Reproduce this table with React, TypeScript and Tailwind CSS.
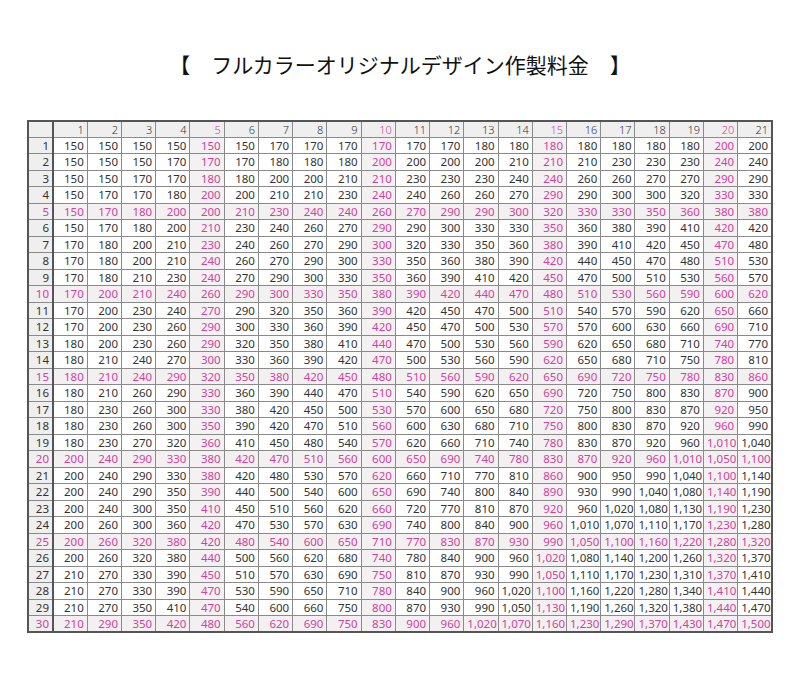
import React from 'react';

// 30 rows (quantity) x 21 columns (size), yen
const prices: number[][] = [
  [150, 150, 150, 150, 150, 150, 170, 170, 170, 170, 170, 170, 180, 180, 180, 180, 180, 180, 180, 200, 200],
  [150, 150, 150, 170, 170, 170, 180, 180, 180, 200, 200, 200, 200, 210, 210, 210, 230, 230, 230, 240, 240],
  [150, 150, 170, 170, 180, 180, 200, 200, 210, 210, 230, 230, 230, 240, 240, 260, 260, 270, 270, 290, 290],
  [150, 170, 170, 180, 200, 200, 210, 210, 230, 240, 240, 260, 260, 270, 290, 290, 300, 300, 320, 330, 330],
  [150, 170, 180, 200, 200, 210, 230, 240, 240, 260, 270, 290, 290, 300, 320, 330, 330, 350, 360, 380, 380],
  [150, 170, 180, 200, 210, 230, 240, 260, 270, 290, 290, 300, 330, 330, 350, 360, 380, 390, 410, 420, 420],
  [170, 180, 200, 210, 230, 240, 260, 270, 290, 300, 320, 330, 350, 360, 380, 390, 410, 420, 450, 470, 480],
  [170, 180, 200, 210, 240, 260, 270, 290, 300, 330, 350, 360, 380, 390, 420, 440, 450, 470, 480, 510, 530],
  [170, 180, 210, 230, 240, 270, 290, 300, 330, 350, 360, 390, 410, 420, 450, 470, 500, 510, 530, 560, 570],
  [170, 200, 210, 240, 260, 290, 300, 330, 350, 380, 390, 420, 440, 470, 480, 510, 530, 560, 590, 600, 620],
  [170, 200, 230, 240, 270, 290, 320, 350, 360, 390, 420, 450, 470, 500, 510, 540, 570, 590, 620, 650, 660],
  [170, 200, 230, 260, 290, 300, 330, 360, 390, 420, 450, 470, 500, 530, 570, 570, 600, 630, 660, 690, 710],
  [180, 200, 230, 260, 290, 320, 350, 380, 410, 440, 470, 500, 530, 560, 590, 620, 650, 680, 710, 740, 770],
  [180, 210, 240, 270, 300, 330, 360, 390, 420, 470, 500, 530, 560, 590, 620, 650, 680, 710, 750, 780, 810],
  [180, 210, 240, 290, 320, 350, 380, 420, 450, 480, 510, 560, 590, 620, 650, 690, 720, 750, 780, 830, 860],
  [180, 210, 260, 290, 330, 360, 390, 440, 470, 510, 540, 590, 620, 650, 690, 720, 750, 800, 830, 870, 900],
  [180, 230, 260, 300, 330, 380, 420, 450, 500, 530, 570, 600, 650, 680, 720, 750, 800, 830, 870, 920, 950],
  [180, 230, 260, 300, 350, 390, 420, 470, 510, 560, 600, 630, 680, 710, 750, 800, 830, 870, 920, 960, 990],
  [180, 230, 270, 320, 360, 410, 450, 480, 540, 570, 620, 660, 710, 740, 780, 830, 870, 920, 960, 1010, 1040],
  [200, 240, 290, 330, 380, 420, 470, 510, 560, 600, 650, 690, 740, 780, 830, 870, 920, 960, 1010, 1050, 1100],
  [200, 240, 290, 330, 380, 420, 480, 530, 570, 620, 660, 710, 770, 810, 860, 900, 950, 990, 1040, 1100, 1140],
  [200, 240, 290, 350, 390, 440, 500, 540, 600, 650, 690, 740, 800, 840, 890, 930, 990, 1040, 1080, 1140, 1190],
  [200, 240, 300, 350, 410, 450, 510, 560, 620, 660, 720, 770, 810, 870, 920, 960, 1020, 1080, 1130, 1190, 1230],
  [200, 260, 300, 360, 420, 470, 530, 570, 630, 690, 740, 800, 840, 900, 960, 1010, 1070, 1110, 1170, 1230, 1280],
  [200, 260, 320, 380, 420, 480, 540, 600, 650, 710, 770, 830, 870, 930, 990, 1050, 1100, 1160, 1220, 1280, 1320],
  [200, 260, 320, 380, 440, 500, 560, 620, 680, 740, 780, 840, 900, 960, 1020, 1080, 1140, 1200, 1260, 1320, 1370],
  [210, 270, 330, 390, 450, 510, 570, 630, 690, 750, 810, 870, 930, 990, 1050, 1110, 1170, 1230, 1310, 1370, 1410],
  [210, 270, 330, 390, 470, 530, 590, 650, 710, 780, 840, 900, 960, 1020, 1100, 1160, 1220, 1280, 1340, 1410, 1440],
  [210, 270, 350, 410, 470, 540, 600, 660, 750, 800, 870, 930, 990, 1050, 1130, 1190, 1260, 1320, 1380, 1440, 1470],
  [210, 290, 350, 420, 480, 560, 620, 690, 750, 830, 900, 960, 1020, 1070, 1160, 1230, 1290, 1370, 1430, 1470, 1500],
];

const fmt = (n: number) => n.toLocaleString('en-US');
const cols = Array.from({ length: 21 }, (_, i) => i + 1);

const App: React.FC = () => {
  return (
    <div className="w-[800px] h-[693px] bg-white pt-[50px]">
      <h1
        className="text-center text-[21px] leading-[28px] text-[#111] font-normal"
        style={{ fontFamily: '"Noto Sans CJK JP", sans-serif' }}
      >
        【　フルカラーオリジナルデザイン作製料金　】
      </h1>

      <div className="mt-[42px] ml-[27px]">
        <table
          className="table-fixed border-collapse border-2 border-[#555] w-[746px] text-[11.5px] text-[#333]"
          style={{ fontFamily: '"Noto Sans", sans-serif' }}
        >
          <colgroup>
            <col className="w-[25px]" />
            {cols.map(c => (
              <col key={c} />
            ))}
          </colgroup>
          <thead>
            <tr className="h-[16px] bg-[#efefef]">
              <th className="border border-[#8a8a8a] border-r-2 border-r-[#555]" />
              {cols.map(c => (
                <th
                  key={c}
                  className={`border border-[#8a8a8a] px-[3px] text-right font-light leading-none text-[11px] ${
                    c % 5 === 0 ? 'text-[#d6409c]' : 'text-[#333]'
                  }`}
                >
                  {c}
                </th>
              ))}
            </tr>
          </thead>
          <tbody>
            {prices.map((row, r) => {
              const pinkRow = (r + 1) % 5 === 0;
              return (
                <tr key={r} className={`h-[16.5px] ${pinkRow ? 'bg-[#f3f0f2]' : ''}`}>
                  <td
                    className={`border border-[#8a8a8a] border-r-2 border-r-[#555] bg-[#efefef] px-[3px] text-right leading-none ${
                      pinkRow ? 'text-[#d6409c]' : 'text-[#333]'
                    }`}
                  >
                    {r + 1}
                  </td>
                  {row.map((v, c) => {
                    const pinkCol = (c + 1) % 5 === 0;
                    const pink = pinkRow || pinkCol;
                    return (
                      <td
                        key={c}
                        className={`border border-[#8a8a8a] px-[3px] text-right leading-none whitespace-nowrap ${
                          pinkCol && !pinkRow ? 'bg-[#f3f1f2]' : ''
                        } ${pink ? 'text-[#d6409c]' : 'text-[#333]'}`}
                      >
                        {fmt(v)}
                      </td>
                    );
                  })}
                </tr>
              );
            })}
          </tbody>
        </table>
      </div>
    </div>
  );
};

export default App;
